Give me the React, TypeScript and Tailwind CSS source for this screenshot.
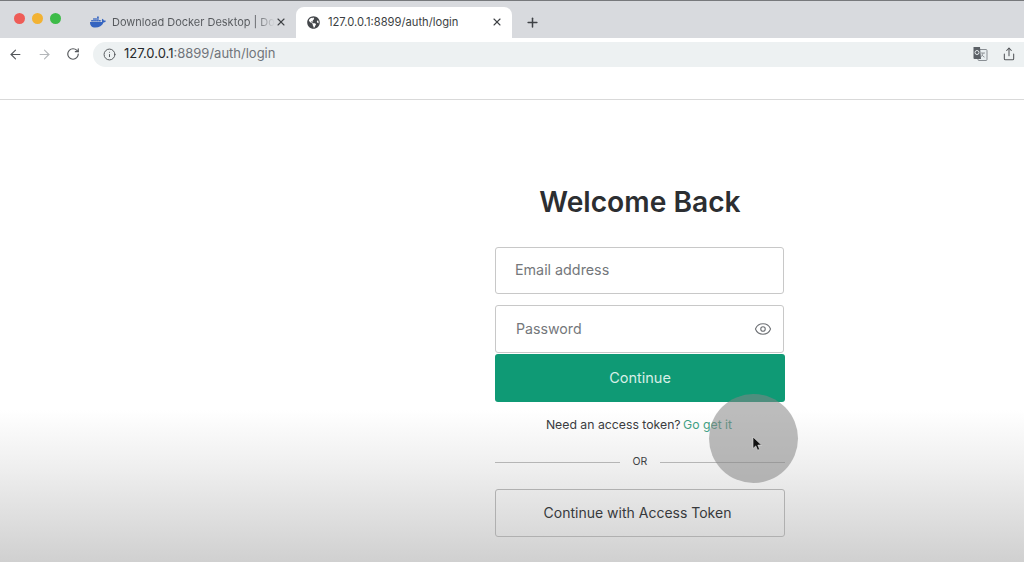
import React from "react";
import { ArrowLeft, ArrowRight, RotateCw, Info, X, Plus, Eye, Share } from "lucide-react";
import { FaDocker, FaGlobeAmericas } from "react-icons/fa";

function TranslateIcon() {
  return (
    <svg width="16" height="16" viewBox="0 0 16 16">
      <rect x="6" y="3.5" width="9" height="11" rx="1" fill="#e8eef0" stroke="#8a8f94" strokeWidth="1" />
      <path d="M9 7h4M11 7c-.3 2-1.300 3.400-2.500 4.200M9.700 8.800c.7 1 1.600 1.800 2.800 2.400" fill="none" stroke="#7d8287" strokeWidth="0.8" />
      <path d="M1.500 1h6.500l1 12H2.500a1 1 0 0 1-1-1z" fill="#5b6066" />
      <circle cx="5" cy="6.500" r="2" fill="none" stroke="#e8eef0" strokeWidth="1" />
    </svg>
  );
}

function Cursor() {
  return (
    <svg width="11" height="16" viewBox="0 0 11 16">
      <path d="M1 1v11.500l2.800-2.600 1.800 4.300 2-.9-1.800-4.200h3.700z" fill="#111" stroke="#e5e5e5" strokeWidth="0.6" />
    </svg>
  );
}

export default function App() {
  return (
    <div className="relative flex h-[562px] w-[1024px] flex-col overflow-hidden bg-white font-['Inter','Liberation_Sans',sans-serif] text-[#2d2f33]">
      <div className="flex h-[38px] shrink-0 items-end border-t border-[#77797c] bg-[#d8dade]">
        <div className="flex h-[37px] w-[80px] shrink-0 items-start gap-[7px] pl-[14px] pt-[12px]">
          <span className="h-[11px] w-[11px] rounded-full bg-[#ee5c57]" />
          <span className="h-[11px] w-[11px] rounded-full bg-[#f2b233]" />
          <span className="h-[11px] w-[11px] rounded-full bg-[#3dbb48]" />
        </div>
        <div className="flex h-[31px] w-[216px] shrink-0 items-center pb-[1px] pl-[10px] pr-[9px]">
          <FaDocker className="shrink-0 text-[#3564c0]" size={16} />
          <span className="ml-[6px] whitespace-nowrap bg-[linear-gradient(to_right,#55585c_88%,#d8dade)] bg-clip-text text-[11px] text-transparent">
            Download Docker Desktop | Do
          </span>
          <X className="ml-auto shrink-0 text-[#3f4246]" size={12} strokeWidth={2.2} />
        </div>
        <div className="flex h-[31px] w-[216px] shrink-0 items-center rounded-t-[8px] bg-white pb-[1px] pl-[11px] pr-[9px]">
          <FaGlobeAmericas className="shrink-0 text-[#44474b]" size={13} />
          <span className="ml-[8px] whitespace-nowrap text-[11.200px] text-[#3c3f43]">127.0.0.1:8899/auth/login</span>
          <X className="ml-auto shrink-0 text-[#3f4246]" size={12} strokeWidth={2.2} />
        </div>
        <div className="flex h-[31px] items-center pl-[13px]">
          <Plus className="text-[#3f4246]" size={15} strokeWidth={2.4} />
        </div>
      </div>

      <div className="flex h-[32px] shrink-0 items-center bg-white">
        <ArrowLeft className="ml-[8px] text-[#54575b]" size={15} strokeWidth={1.8} />
        <ArrowRight className="ml-[14px] text-[#b4b7ba]" size={15} strokeWidth={1.8} />
        <RotateCw className="ml-[14px] text-[#54575b]" size={14} strokeWidth={2} />
        <div className="ml-[13px] flex h-[25px] flex-1 items-center justify-between rounded-l-full bg-[#edf1f2] pl-[10px] pr-[8px]">
          <div className="flex items-center">
            <Info className="text-[#54575b]" size={13} strokeWidth={1.8} />
            <span className="ml-[8px] whitespace-nowrap text-[13px] text-[#70747a]">
              <span className="text-[#26282b]">127.0.0.1</span>:8899/auth/login
            </span>
          </div>
          <div className="flex items-center gap-[14px]">
            <TranslateIcon />
            <Share className="text-[#54575b]" size={14} strokeWidth={1.8} />
          </div>
        </div>
      </div>

      <div className="h-[30px] shrink-0 border-b border-[#d9d9d9] bg-white" />

      <main className="flex flex-1 flex-col bg-[linear-gradient(to_bottom,#ffffff_0,#ffffff_310px,#eeeeee_370px,#d0d0d0_100%)] pl-[495px]">
        <div className="flex w-[290px] flex-col">
          <h1 className="mt-[83px] text-center text-[28.200px] font-semibold leading-[38px] text-[#2c2e31]">Welcome Back</h1>
          <div className="mt-[26px] flex h-[47px] w-[289px] items-center rounded-[3px] border border-[#c8c8c8] bg-white pb-[2px] pl-[19px] text-[14.300px] text-[#74777b]">
            Email address
          </div>
          <div className="mt-[11px] flex h-[48px] w-[289px] items-center justify-between rounded-[3px] border border-[#c8c8c8] bg-white pl-[20px] pr-[11px] text-[14.200px] text-[#74777b]">
            Password
            <Eye className="text-[#6f7276]" size={18} strokeWidth={1.5} />
          </div>
          <button className="mt-[1px] h-[48px] rounded-[3px] bg-[#0f9a75] text-[14.500px] text-[#d7efe7]">
            Continue
          </button>
          <p className="mt-[14px] pr-[2px] text-center text-[12.250px] leading-[18px] text-[#3a3c3f]">
            Need an access token? <span className="-ml-[1px] text-[#3f9f84]">Go get it</span>
          </p>
          <div className="mt-[19px] flex items-center">
            <div className="h-px w-[125px] bg-[#b5b5b5]" />
            <span className="flex-1 text-center text-[10.500px] leading-[18px] text-[#3f4144]">OR</span>
            <div className="h-px w-[125px] bg-[#b5b5b5]" />
          </div>
          <button className="mt-[18px] h-[48px] rounded-[3px] border border-[#b0b0b0] pb-[2px] pr-[5px] text-[14px] text-[#37393c]">
            Continue with Access Token
          </button>
        </div>
      </main>

      <div className="absolute left-[709px] top-[394px] flex h-[89px] w-[89px] items-center justify-center rounded-full bg-[#858585]/55">
        <div className="ml-[7px] mt-[11px]">
          <Cursor />
        </div>
      </div>
    </div>
  );
}
